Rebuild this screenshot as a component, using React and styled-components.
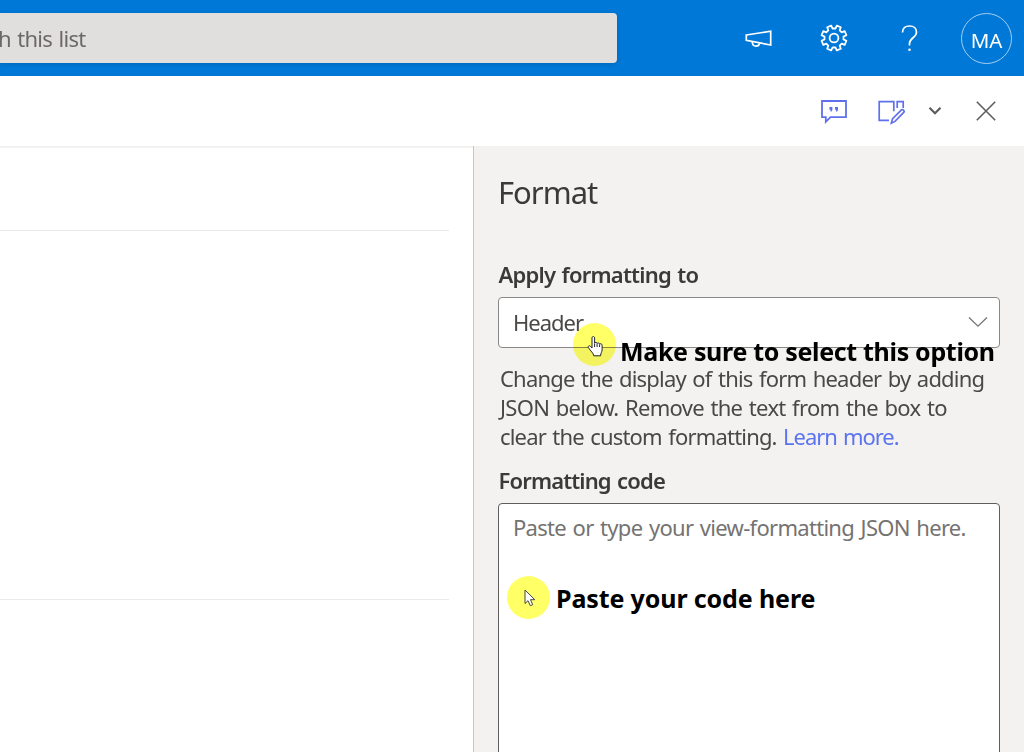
import styled, { createGlobalStyle } from "styled-components";

export default function App() {
  return (
    <>
      <GlobalStyle />
      <Page>
        <SuiteBar>
          <SearchBox>h this list</SearchBox>
          <SuiteActions>
            <MegaphoneIcon />
            <GearIcon />
            <HelpIcon />
            <Avatar>MA</Avatar>
          </SuiteActions>
        </SuiteBar>
        <CommandBar>
          <CommentIcon />
          <EditFormIcon />
          <ChevronIcon />
          <CloseIcon />
        </CommandBar>
        <Content>
          <FormArea>
            <FormHeader />
            <FormBody />
          </FormArea>
          <FormatPanel>
            <PanelTitle>Format</PanelTitle>
            <Label $spacing="-0.79px">Apply formatting to</Label>
            <Dropdown>
              <span>Header</span>
              <DropdownArrow />
              <Callout $left={74} $top={25} $gap={4}>
                <Spot>
                  <HandCursor />
                </Spot>
                <CalloutText $drop={7} $spacing="-0.32px">
                  Make sure to select this option
                </CalloutText>
              </Callout>
            </Dropdown>
            <Description>
              <Line $spacing="-0.8px">Change the display of this form header by adding</Line>
              <Line $spacing="-0.69px">JSON below. Remove the text from the box to</Line>
              <Line $spacing="-0.82px">
                clear the custom formatting. <LearnMore>Learn more.</LearnMore>
              </Line>
            </Description>
            <Label $spacing="-0.86px">Formatting code</Label>
            <CodeBox>
              Paste or type your view-formatting JSON here.
              <Callout $left={8} $top={72} $gap={6}>
                <Spot>
                  <ArrowCursor />
                </Spot>
                <CalloutText $drop={1} $spacing="-0.12px">
                  Paste your code here
                </CalloutText>
              </Callout>
            </CodeBox>
          </FormatPanel>
        </Content>
      </Page>
    </>
  );
}

function MegaphoneIcon() {
  return (
    <svg width="28" height="20" viewBox="0 0 28 20" fill="none" stroke="#fff" strokeWidth="1.7">
      <path d="M1.300 7 25.700 3.200V17L1.300 12.400z" />
      <path d="M7.200 13.800c.2 2.900 1.700 4.400 3.800 4.400 1.900 0 3.200-1.100 3.700-2.900" />
    </svg>
  );
}

function GearIcon() {
  // eight teeth, each one a wedge turned by 45 degrees
  const points = [];
  for (let i = 0; i < 8; i++) {
    [[-14, 9.6], [-10, 12.7], [10, 12.7], [14, 9.6]].forEach(([deg, r]) => {
      const a = ((i * 45 + 22.5 + deg) * Math.PI) / 180;
      points.push(`${(14 + r * Math.sin(a)).toFixed(2)},${(14 - r * Math.cos(a)).toFixed(2)}`);
    });
  }
  return (
    <svg width="28" height="28" viewBox="0 0 28 28" fill="none" stroke="#fff" strokeWidth="1.8">
      <polygon points={points.join(" ")} strokeLinejoin="round" />
      <circle cx="14" cy="14" r="4.4" />
    </svg>
  );
}

function HelpIcon() {
  return (
    <svg width="20" height="28" viewBox="0 0 20 28" fill="none" stroke="#fff" strokeWidth="1.7">
      <path d="M2.500 8.500C2.500 4.500 5.300 2 9.500 2s7 2.500 7 6.200c0 5.300-7 5.800-7 11.300V21.500" />
      <circle cx="9.500" cy="25.700" r="1.300" fill="#fff" stroke="none" />
    </svg>
  );
}

function CommentIcon() {
  return (
    <CommandSvg width="28" height="26" viewBox="0 0 28 26" fill="none" stroke="#5f70ea" strokeWidth="1.8">
      <path d="M2 2h24v16.200H10.500L5.800 22.800V18.200H2z" />
      <path
        d="M9.400 8h3v2.200c0 1.300-.6 2.200-1.900 2.600v-2H9.400zM15 8h3v2.200c0 1.300-.6 2.200-1.900 2.600v-2H15z"
        fill="#5f70ea"
        stroke="none"
      />
    </CommandSvg>
  );
}

function EditFormIcon() {
  return (
    <EditSvg width="28" height="26" viewBox="0 0 28 26" fill="none" stroke="#5f70ea" strokeWidth="1.7">
      <path d="M12 21.300H2.200V2.700h14.600v9.500" />
      <path d="M20.200 9V2.700h6V9" />
      <path d="M14.300 24.200l1.300-4.600 8.600-8.400c1.700-1.500 3.900.8 2.300 2.500l-8.500 8.700z" />
    </EditSvg>
  );
}

function ChevronIcon() {
  return (
    <ChevronSvg width="14" height="10" viewBox="0 0 14 10" fill="none" stroke="#605e5c" strokeWidth="2.2">
      <path d="M1.500 1.800 7 7.200l5.500-5.400" />
    </ChevronSvg>
  );
}

function CloseIcon() {
  return (
    <CloseSvg width="20" height="20" viewBox="0 0 20 20" fill="none" stroke="#605e5c" strokeWidth="1.6">
      <path d="M.8.8l18.400 18.400M19.200.8.8 19.200" />
    </CloseSvg>
  );
}

function DropdownArrow() {
  return (
    <svg width="20" height="12" viewBox="0 0 20 12" fill="none" stroke="#777573" strokeWidth="1.3">
      <path d="M1 1.500l9 8.700 9-8.700" />
    </svg>
  );
}

function HandCursor() {
  return (
    <Cursor $x={1} $y={3} width="17" height="21" viewBox="0 0 16 21" fill="#fff" stroke="#222" strokeWidth="1">
      <path d="M4.500 12V2c0-2 2.600-2 2.600 0v5.200c.3-1.200 2.500-1 2.500.4.500-1.100 2.500-.8 2.500.6.600-.9 2.500-.5 2.500 1V14c0 1.800-1.500 3-1.500 5.800H6.300C6 17 3 15 .8 11.500c-.5-1.500 1-2.200 2-1.300z" />
      <path d="M7.100 7.500V11M9.600 8v3M12.100 8.500V11" />
    </Cursor>
  );
}

function ArrowCursor() {
  return (
    <Cursor $x={3} $y={0} width="12" height="18" viewBox="0 0 12 18" fill="#fff" stroke="#444" strokeWidth="1">
      <path d="M1 1v13.500l3-2.800 2.300 5 2.400-1-2.200-5h4.300z" />
    </Cursor>
  );
}

const GlobalStyle = createGlobalStyle`
  * {
    box-sizing: border-box;
  }
  body {
    margin: 0;
    overflow: hidden;
    font-family: "Noto Sans", "Open Sans", sans-serif;
  }
  svg {
    display: block;
    flex-shrink: 0;
  }
`;

const Page = styled.div`
  display: flex;
  flex-direction: column;
  width: 1024px;
  height: 752px;
  overflow: hidden;
  background: #fff;
`;

const SuiteBar = styled.header`
  display: flex;
  justify-content: space-between;
  align-items: center;
  flex: 0 0 76px;
  padding-right: 12px;
  background: #0078d7;
`;

const SearchBox = styled.div`
  display: flex;
  align-items: center;
  width: 617px;
  height: 50px;
  border-radius: 0 4px 4px 0;
  background: #e1dfdd;
  color: #6b6967;
  font-size: 22px;
  letter-spacing: -0.75px;
  word-spacing: 1.5px;
  text-indent: -2px;
  box-shadow: 0 1px 4px rgba(0, 0, 0, 0.14);
`;

const SuiteActions = styled.nav`
  display: grid;
  grid-template-columns: 75px 76px 75px 65px;
  align-items: center;
  justify-items: center;
  width: 291px;
`;

const Avatar = styled.div`
  display: flex;
  align-items: center;
  justify-content: center;
  justify-self: end;
  width: 51px;
  height: 51px;
  padding-top: 3px;
  border: 1px solid #a6d0f2;
  border-radius: 50%;
  color: #fff;
  font-size: 20.5px;
`;

const CommandBar = styled.div`
  display: flex;
  align-items: center;
  justify-content: flex-end;
  flex: 0 0 70px;
  padding-right: 28px;
`;

const CommandSvg = styled.svg`
  margin-top: 2px;
`;

const EditSvg = styled(CommandSvg)`
  margin-left: 29px;
`;

const ChevronSvg = styled.svg`
  margin-left: 23px;
`;

const CloseSvg = styled.svg`
  margin-left: 34px;
`;

const Content = styled.main`
  display: flex;
  flex: 1;
  min-height: 0;
`;

const FormArea = styled.section`
  width: 473px;
  padding-right: 24px;
  border-top: 2px solid #f3f2f1;
`;

const FormHeader = styled.div`
  height: 83px;
  border-bottom: 1px solid #eaeaea;
`;

const FormBody = styled.div`
  height: 369px;
  border-bottom: 1px solid #eaeaea;
`;

const FormatPanel = styled.aside`
  display: flex;
  flex-direction: column;
  width: 551px;
  padding: 25px 24px 0 24px;
  border-left: 1px solid #c8c6c4;
  background: #f3f2f1;
`;

const PanelTitle = styled.h2`
  margin: 0 0 46px;
  color: #3b3a39;
  font-size: 31px;
  font-weight: 400;
  line-height: 42px;
  letter-spacing: -1px;
`;

const Label = styled.label`
  height: 30px;
  margin-bottom: 8px;
  padding-left: 0.5px;
  color: #3b3a39;
  font-size: 22px;
  font-weight: 600;
  line-height: 31px;
  letter-spacing: ${(props) => props.$spacing};
  word-spacing: 1.5px;
  white-space: nowrap;
`;

const Dropdown = styled.div`
  position: relative;
  display: flex;
  align-items: center;
  justify-content: space-between;
  flex: 0 0 51px;
  width: 502px;
  padding: 0 11px 2px 14px;
  border: 1px solid #8a8886;
  border-radius: 4px;
  background: #fff;
  color: #4a4846;
  font-size: 22px;
  letter-spacing: -1px;
`;

const Description = styled.div`
  margin: 16px 0 14px 2px;
`;

const Line = styled.p`
  margin: 0;
  color: #4a4846;
  font-size: 22px;
  line-height: 29px;
  letter-spacing: ${(props) => props.$spacing};
  word-spacing: 1.5px;
  white-space: nowrap;
`;

const LearnMore = styled.a`
  color: #5b74ee;
  letter-spacing: -1.05px;
`;

const CodeBox = styled.div`
  position: relative;
  flex: 0 0 300px;
  width: 502px;
  padding: 8px 14px;
  border: 1px solid #605e5c;
  border-radius: 4px;
  background: #fff;
  color: #757371;
  font-size: 22px;
  line-height: 30px;
  letter-spacing: -0.7px;
  word-spacing: 1.5px;
  white-space: nowrap;
`;

// annotations sit on top of the fields
const Callout = styled.div`
  position: absolute;
  left: ${(props) => props.$left}px;
  top: ${(props) => props.$top}px;
  display: flex;
  gap: ${(props) => props.$gap}px;
`;

const CalloutText = styled.strong`
  margin-top: ${(props) => props.$drop}px;
  color: #000;
  font-size: 25px;
  font-weight: 700;
  line-height: 43px;
  letter-spacing: ${(props) => props.$spacing};
  word-spacing: 0;
  white-space: nowrap;
`;

const Spot = styled.span`
  display: grid;
  place-items: center;
  width: 43px;
  height: 43px;

  /* multiplied so that the field below shows through */
  &::before {
    content: "";
    grid-area: 1 / 1;
    width: 43px;
    height: 43px;
    border-radius: 50%;
    background: #ffff66;
    mix-blend-mode: multiply;
  }
`;

const Cursor = styled.svg`
  position: relative;
  grid-area: 1 / 1;
  margin: ${(props) => props.$y}px 0 0 ${(props) => props.$x}px;
`;
